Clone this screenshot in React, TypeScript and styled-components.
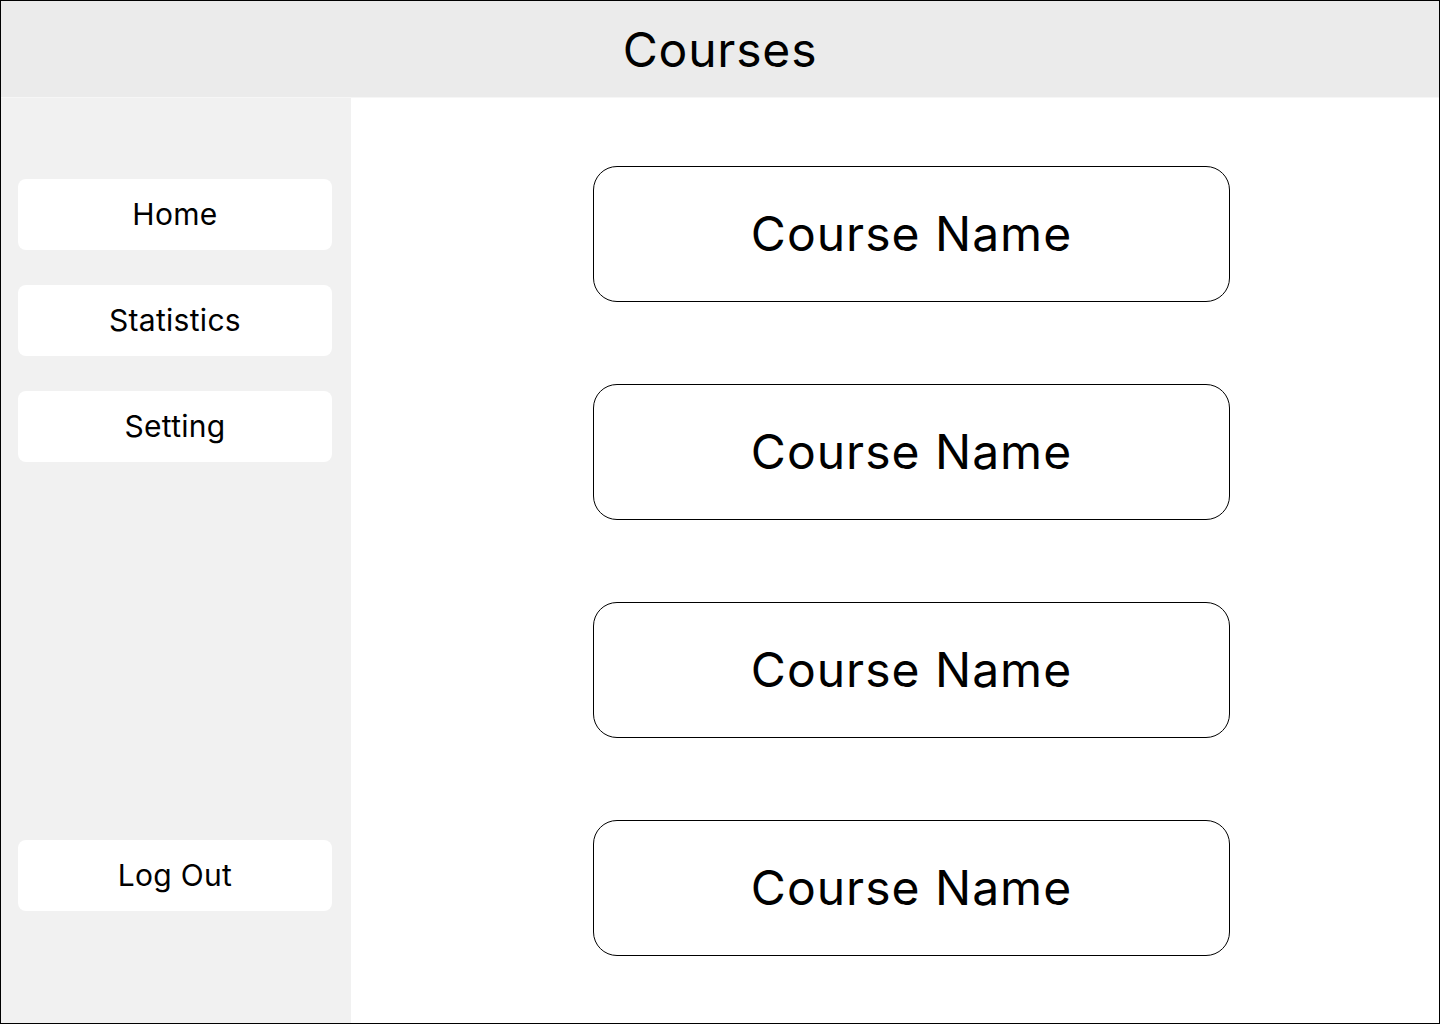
import React from "react";
import styled, { createGlobalStyle } from "styled-components";

const GlobalStyle = createGlobalStyle`
  html, body { margin: 0; padding: 0; background: #ffffff; }
  body { font-family: Inter, "Noto Sans", Arial, sans-serif; color: #000; }
  * { box-sizing: border-box; }
`;

const Frame = styled.div`
  width: 1440px;
  height: 1024px;
  border: 1px solid #000;
  display: flex;
  flex-direction: column;
  background: #ffffff;
  overflow: hidden;
`;

const Header = styled.header`
  height: 97px;
  flex: none;
  background: #ebebeb;
  border-bottom: 1px solid #f6f6f6;
  display: flex;
  align-items: center;
  justify-content: center;
  padding-top: 1px;
`;

const Title = styled.h1`
  margin: 0;
  font-size: 48px;
  font-weight: 400;
  line-height: 1;
  letter-spacing: 0.8px;
`;

const Body = styled.div`
  flex: 1;
  display: flex;
  min-height: 0;
`;

const Sidebar = styled.nav`
  width: 350px;
  flex: none;
  background: #f1f1f1;
  display: flex;
  flex-direction: column;
  padding: 81px 19px 112px 17px;
  gap: 35px;
`;

const NavButton = styled.button<{ $bottom?: boolean }>`
  height: 71px;
  width: 314px;
  border: none;
  border-radius: 8px;
  background: #ffffff;
  font-family: Inter, "Noto Sans", Arial, sans-serif;
  font-size: 30px;
  font-weight: 400;
  letter-spacing: 0.3px;
  color: #000;
  display: flex;
  align-items: center;
  justify-content: center;
  padding: 0 0 2px;
  cursor: pointer;
  margin-top: ${(p) => (p.$bottom ? "auto" : "0")};
`;

const Main = styled.main`
  flex: 1;
  display: flex;
  flex-direction: column;
  padding: 68px 0 0 242px;
  gap: 82px;
`;

const CourseCard = styled.div`
  width: 637px;
  height: 136px;
  border: 1px solid #000;
  border-radius: 24px;
  display: flex;
  align-items: center;
  justify-content: center;
  font-size: 48px;
  font-weight: 400;
  letter-spacing: 1px;
  padding: 0 0 2px 0;
`;

const navItems = ["Home", "Statistics", "Setting"];
const courses = ["Course Name", "Course Name", "Course Name", "Course Name"];

export default function App() {
  return (
    <>
      <GlobalStyle />
      <Frame>
        <Header>
          <Title>Courses</Title>
        </Header>
        <Body>
          <Sidebar>
            {navItems.map((n) => (
              <NavButton key={n}>{n}</NavButton>
            ))}
            <NavButton $bottom>Log Out</NavButton>
          </Sidebar>
          <Main>
            {courses.map((c, i) => (
              <CourseCard key={i}>{c}</CourseCard>
            ))}
          </Main>
        </Body>
      </Frame>
    </>
  );
}
